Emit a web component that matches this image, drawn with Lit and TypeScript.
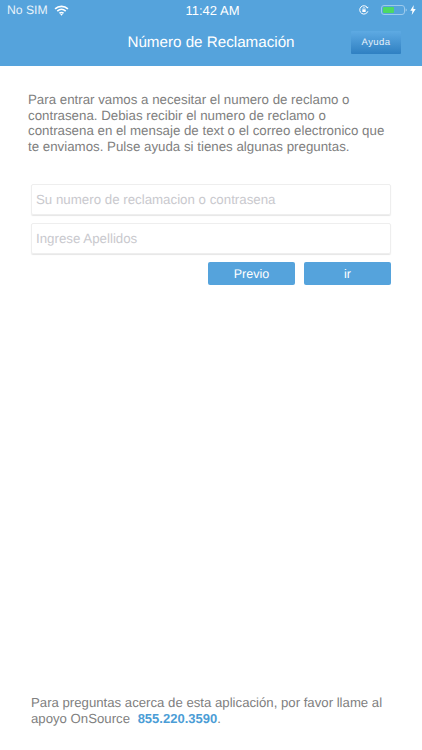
import { LitElement, css, html } from "lit";
import { customElement } from "lit/decorators.js";

@customElement("app-root")
export class AppRoot extends LitElement {
  static styles = css`
    :host {
      display: flex;
      flex-direction: column;
      height: 750px;
      background: #fff;
      font-family: "Liberation Sans", Arial, sans-serif;
      text-rendering: geometricPrecision;
      overflow: hidden;
    }
    .header {
      background: #55a3dc;
      height: 66px;
      flex: none;
      color: #fff;
      box-sizing: border-box;
    }
    .status {
      height: 20px;
      display: grid;
      grid-template-columns: 1fr auto 1fr;
      align-items: center;
      padding: 0 6px 0 7px;
      font-size: 12.2px;
    }
    .status-left {
      display: flex;
      align-items: center;
      gap: 6px;
      color: #e8f2fa;
    }
    .time {
      font-size: 13px;
      margin-left: 2px;
    }
    .status-right {
      display: flex;
      justify-content: flex-end;
      align-items: center;
      gap: 3px;
    }
    .lock {
      margin-right: 9px;
    }
    .nav {
      height: 46px;
      display: flex;
      align-items: center;
      justify-content: center;
      position: relative;
      padding-bottom: 2px;
      box-sizing: border-box;
      font-size: 15.2px;
    }
    .help {
      position: absolute;
      right: 21px;
      top: 11px;
      width: 50px;
      height: 23px;
      border-radius: 1px;
      background: linear-gradient(#5eaae3, #2f80c2);
      font-size: 9.5px;
      letter-spacing: 0.4px;
      display: flex;
      align-items: center;
      justify-content: center;
      color: #e6f1fa;
    }
    .content {
      flex: 1;
      display: flex;
      flex-direction: column;
      color: #808080;
    }
    .intro {
      margin: 26px 0 0 28px;
      width: 370px;
      font-size: 13.3px;
      line-height: 15.6px;
    }
    .form {
      margin: 30px 31px 0;
      display: flex;
      flex-direction: column;
      gap: 8px;
    }
    .field {
      height: 31px;
      box-sizing: border-box;
      border: 1px solid #eeeeee;
      border-radius: 2px;
      box-shadow: 0 1px 1px #e6e6e6;
      padding-left: 4px;
      display: flex;
      align-items: center;
      font-size: 13.3px;
      color: #c9c9ce;
    }
    .actions {
      display: flex;
      justify-content: flex-end;
      gap: 9px;
    }
    .btn {
      width: 87px;
      height: 23px;
      background: #55a3dc;
      color: #fff;
      border-radius: 2px;
      font-size: 12.5px;
      display: flex;
      align-items: center;
      justify-content: center;
    }
    .footer {
      margin: auto 31px 0;
      padding-bottom: 23px;
      font-size: 13.2px;
      line-height: 16px;
    }
    .phone {
      color: #4b9dd6;
      font-weight: 700;
      font-size: 13px;
      margin-left: 4px;
    }
  `;

  render() {
    return html`
      <div class="header">
        <div class="status">
          <div class="status-left">
            <span>No SIM</span>
            <svg width="15" height="11" viewBox="0 0 16 12" fill="none" stroke="#fff" stroke-width="1.8">
              <path d="M1 4.2C5 .6 11 .6 15 4.2" />
              <path d="M3.4 6.6c2.7-2.3 6.5-2.3 9.2 0" />
              <path d="M5.8 9c1.3-1 3.1-1 4.4 0" />
              <path d="M8 11.8 6.6 10.2c.8-.5 2-.5 2.8 0Z" fill="#fff" stroke="none" />
            </svg>
          </div>
          <span class="time">11:42 AM</span>
          <div class="status-right">
            <svg class="lock" width="10" height="10" viewBox="0 0 12 12" fill="none" stroke="#fff" stroke-width="1.2">
              <path d="M10.6 7.6A5 5 0 1 1 10 3" />
              <path d="M11.6 2.2 10.2 4.2 8.2 3Z" fill="#fff" stroke="none" />
              <rect x="4" y="5.2" width="4" height="3.2" fill="#fff" stroke="none" />
              <path d="M4.8 5.2V4.2a1.2 1.2 0 0 1 2.4 0v1" stroke-width="0.8" />
            </svg>
            <svg width="26" height="10" viewBox="0 0 26 10" fill="none">
              <rect x="0.5" y="0.5" width="23" height="9" rx="2.5" stroke="#9ccaec" />
              <rect x="2" y="2" width="11" height="6" rx="1" fill="#4cd964" />
              <path d="M24.6 3.6c.9.2 1.2.7 1.2 1.4s-.3 1.2-1.2 1.4Z" fill="#9ccaec" />
            </svg>
            <svg width="6" height="10" viewBox="0 0 6 11" fill="#fff">
              <path d="M3.8 0 0 6.2h2.4L1.6 11 6 4.4H3.4Z" />
            </svg>
          </div>
        </div>
        <div class="nav">
          <span>Número de Reclamación</span>
          <div class="help">Ayuda</div>
        </div>
      </div>
      <div class="content">
        <div class="intro">
          Para entrar vamos a necesitar el numero de reclamo o<br />
          contrasena. Debias recibir el numero de reclamo o<br />
          contrasena en el mensaje de text o el correo electronico que<br />
          te enviamos. Pulse ayuda si tienes algunas preguntas.
        </div>
        <div class="form">
          <div class="field">Su numero de reclamacion o contrasena</div>
          <div class="field">Ingrese Apellidos</div>
          <div class="actions">
            <div class="btn">Previo</div>
            <div class="btn">ir</div>
          </div>
        </div>
        <div class="footer">
          Para preguntas acerca de esta aplicación, por favor llame al<br />
          apoyo OnSource <span class="phone">855.220.3590</span>.
        </div>
      </div>
    `;
  }
}
